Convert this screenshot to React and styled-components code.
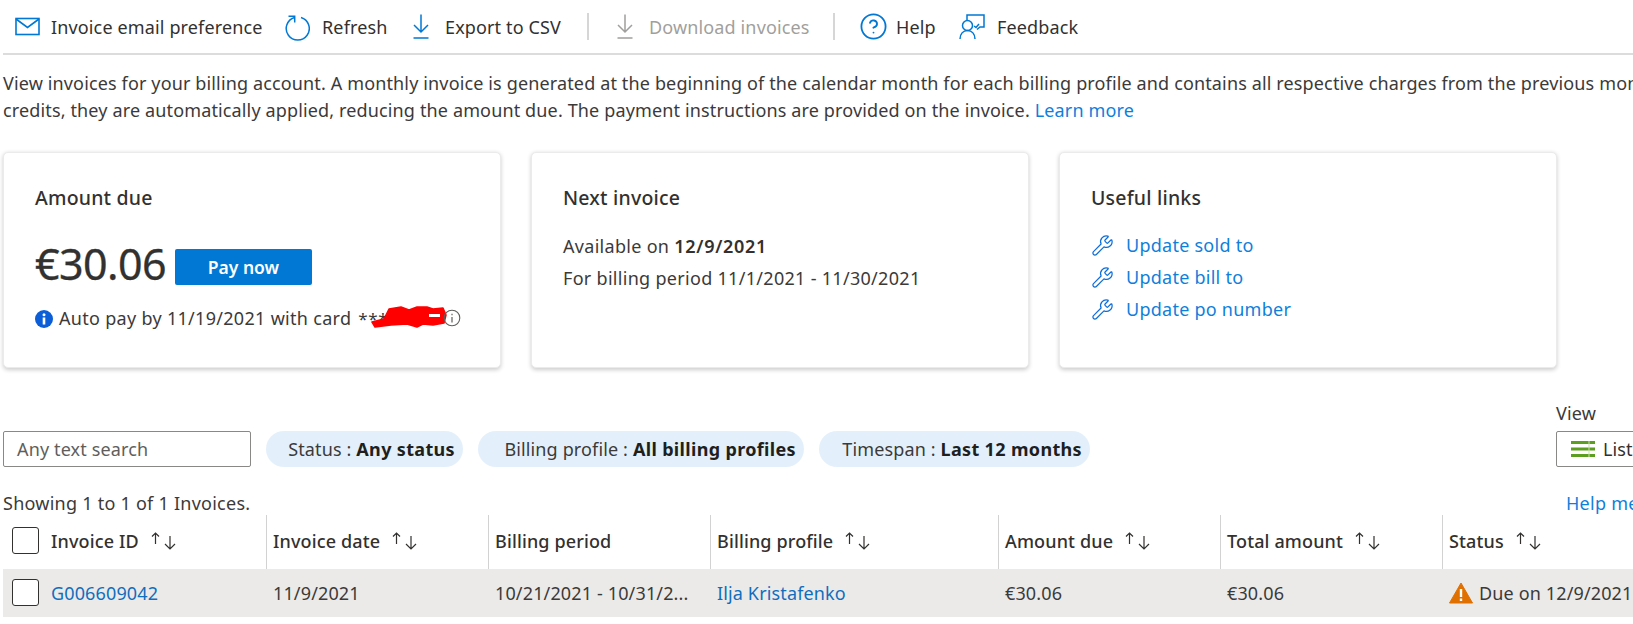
import React from 'react';
import styled, { createGlobalStyle } from 'styled-components';
import { Wrench, CircleHelp } from 'lucide-react';

const Global = createGlobalStyle`
  html, body { margin: 0; padding: 0; background: #fff; width: 1633px; height: 624px; overflow: hidden; }
  * { box-sizing: border-box; }
  body { font-family: "Noto Sans", "Open Sans", sans-serif; color: #323130; }
`;

const Page = styled.div`
  width: 1633px;
  height: 624px;
  overflow: hidden;
  font-size: 18px;
  letter-spacing: 0.14px;
`;

const Toolbar = styled.div`
  display: flex;
  align-items: center;
  height: 55px;
  margin-left: 3px;
  padding-left: 12px;
  border-bottom: 2px solid #dcdcdc;
`;

const ToolItem = styled.div`
  display: flex;
  align-items: center;
  width: ${p => p.$w}px;
  flex: none;
  color: ${p => (p.$disabled ? '#a19f9d' : '#323130')};
  svg { flex: none; }
`;

const ToolIcon = styled.span`
  display: flex;
  align-items: center;
  width: ${p => p.$w}px;
  flex: none;
  color: ${p => (p.$disabled ? '#a19f9d' : '#0078d4')};
`;

const ToolDivider = styled.div`
  width: 2px;
  height: 27px;
  flex: none;
  margin-right: ${p => p.$after}px;
  background: #d6d6d6;
`;

const Intro = styled.div`
  margin: 15px 0 0 3px;
  line-height: 27px;
  white-space: nowrap;
  color: #3b3a39;
`;

const Link = styled.a`
  color: ${p => p.$dark ? '#106ebe' : '#0f7fdc'};
`;

const Cards = styled.div`
  display: flex;
  gap: 30px;
  margin: 28px 0 0 3px;
`;

const Card = styled.section`
  width: 498px;
  height: 216px;
  flex: none;
  padding: 33px 30px 0 31px;
  background: #fff;
  border-radius: 5px;
  border: 1px solid #ebebeb;
  box-shadow: 0 1.5px 4px rgba(0, 0, 0, 0.2);
`;

const CardTitle = styled.h2`
  margin: 0;
  font-size: 19.5px;
  font-weight: 500;
  line-height: 24px;
  letter-spacing: 0.2px;
  color: #323130;
`;

const AmountRow = styled.div`
  display: flex;
  align-items: center;
  gap: 9px;
  margin-top: 28px;
`;

const Amount = styled.div`
  font-size: 43px;
  line-height: 52px;
  font-weight: 400;
  letter-spacing: -0.6px;
  color: #323130;
  -webkit-text-stroke: 0.3px #323130;
`;

const PayButton = styled.button`
  width: 137px;
  height: 36px;
  margin-top: 6px;
  border: 0;
  border-radius: 2px;
  background: #0078d4;
  color: #fff;
  font: 600 17.5px "Noto Sans", sans-serif;
`;

const AutoPay = styled.div`
  position: relative;
  display: flex;
  align-items: center;
  gap: 6px;
  margin-top: 15px;
  line-height: 26px;
  white-space: nowrap;
  letter-spacing: 0.3px;
  color: #3b3a39;
`;

const Stars = styled.span`
  font-size: 17px;
  letter-spacing: 0.6px;
  margin-left: 2px;
`;

const Scribble = styled.svg`
  position: absolute;
  left: 336px;
  top: 1px;
`;

const SmallInfo = styled.svg`
  position: absolute;
  left: 408px;
  top: 4px;
`;

const CardText = styled.div`
  line-height: 32px;
  letter-spacing: 0.3px;
  color: #3b3a39;
  strong { font-weight: 600; letter-spacing: 0.7px; color: #323130; }
`;

const CardBody = styled.div`
  margin-top: ${p => p.$mt}px;
`;

const LinkRow = styled.div`
  display: flex;
  align-items: center;
  gap: 12px;
  height: 32px;
  letter-spacing: 0.25px;
  color: #0f7fdc;
  svg { color: #0f6fd8; }
`;

const Filters = styled.div`
  position: relative;
  display: flex;
  gap: 15px;
  margin: 63px 0 0 3px;
  height: 37px;
`;

const SearchBox = styled.div`
  width: 248px;
  height: 36px;
  padding-left: 13px;
  display: flex;
  align-items: center;
  border: 1px solid #8a8886;
  border-radius: 2px;
  color: #605e5c;
`;

const Chip = styled.div`
  width: ${p => p.$w}px;
  height: 36px;
  display: flex;
  align-items: center;
  justify-content: flex-end;
  white-space: pre;
  padding-right: 8px;
  border-radius: 18px;
  background: #e3f0fb;
  color: #3b3a39;
  strong { font-weight: 700; letter-spacing: 0.34px; color: #201f1e; }
`;

const ViewBlock = styled.div`
  position: absolute;
  left: 1553px;
  top: -31px;
  width: 200px;
`;

const ViewLabel = styled.div`
  line-height: 26px;
  margin-bottom: 5px;
  color: #3b3a39;
`;

const ViewButton = styled.div`
  display: flex;
  align-items: center;
  gap: 8px;
  height: 36px;
  padding-left: 14px;
  border: 1px solid #8a8886;
  border-radius: 2px;
`;

const MetaRow = styled.div`
  display: flex;
  justify-content: space-between;
  align-items: center;
  margin: 22px 0 0 3px;
  height: 26px;
  letter-spacing: 0.25px;
  color: #3b3a39;
  white-space: nowrap;
`;

const HelpLink = styled(Link)`
  position: absolute;
  left: 1566px;
`;

const Grid = styled.div`
  display: grid;
  grid-template-columns: 264px 222px 222px 288px 222px 222px 190px;
  margin-left: 3px;
  margin-top: -1px;
`;

const HeadCell = styled.div`
  height: 54px;
  display: flex;
  align-items: center;
  padding-left: ${p => (p.$first ? '9px' : '6px')};
  padding-bottom: 3px;
  font-weight: 500;
  color: #323130;
  border-right: ${p => (p.$last ? '0' : '1.5px solid #d2d2d2')};
  white-space: nowrap;
`;

const RowCell = styled.div`
  height: 48px;
  display: flex;
  align-items: center;
  padding-left: ${p => (p.$first ? '9px' : '6px')};
  padding-bottom: 1px;
  background: #ebeae9;
  color: #3b3a39;
  white-space: nowrap;
  overflow: hidden;
`;

const Check = styled.span`
  width: 27px;
  height: 27px;
  flex: none;
  margin-right: 12px;
  background: #fff;
  border: 1.5px solid #323130;
  border-radius: 3px;
`;

const Sort = styled.svg`
  margin-left: 12px;
  flex: none;
`;

const Warn = styled.svg`
  margin-right: 6px;
  flex: none;
`;

const MailIcon = () => (
  <svg width="25" height="19" viewBox="0 0 25 19" fill="none" stroke="currentColor" strokeWidth="1.6">
    <rect x="1" y="1.500" width="23" height="16" />
    <path d="M1 2l11.500 8.500L24 2" />
  </svg>
);
const RefreshIcon = () => (
  <svg width="26" height="28" viewBox="0 0 26 28" fill="none" stroke="currentColor" strokeWidth="1.5">
    <path d="M10.500 4.500A11.500 11.500 0 1 0 17 4.500" />
    <path d="M4.500 3.200h6.200v6.200" />
  </svg>
);
const DownIcon = () => (
  <svg width="18" height="25" viewBox="0 0 18 25" fill="none" stroke="currentColor" strokeWidth="1.5">
    <path d="M9 0.500V18M2 11l7 7 7-7M1.500 24h15" />
  </svg>
);
const FeedbackIcon = () => (
  <svg width="26" height="25" viewBox="0 0 26 25" fill="none" stroke="currentColor" strokeWidth="1.5">
    <circle cx="8.500" cy="11.500" r="5" />
    <path d="M1 25c0-5 3-8.500 7.500-8.500S16 20 16 25" />
    <path d="M8 6V1h17v12h-4l-3 2.500" />
    <path d="M20 10l-3 3.500-2-1.500" />
  </svg>
);
const SortIcon = () => (
  <Sort width="25" height="19" viewBox="0 0 25 19" fill="none" stroke="#323130" strokeWidth="1.2">
    <path d="M4.500 13V2M1 5.500L4.500 2 8 5.500" />
    <path d="M19 5v13M14 13l5 5 5-5" />
  </Sort>
);

export default function App() {
  return (
    <Page>
      <Global />
      <Toolbar>
        <ToolItem $w={269}><ToolIcon $w={36}><MailIcon /></ToolIcon>Invoice email preference</ToolItem>
        <ToolItem $w={128}><ToolIcon $w={38}><RefreshIcon /></ToolIcon>Refresh</ToolItem>
        <ToolItem $w={175}><ToolIcon $w={33}><DownIcon /></ToolIcon>Export to CSV</ToolItem>
        <ToolDivider $after={27} />
        <ToolItem $w={217} $disabled><ToolIcon $w={33} $disabled><DownIcon /></ToolIcon>Download invoices</ToolItem>
        <ToolDivider $after={24} />
        <ToolItem $w={100}><ToolIcon $w={37}><CircleHelp size={29} strokeWidth={1.5} /></ToolIcon>Help</ToolItem>
        <ToolItem $w={200}><ToolIcon $w={38}><FeedbackIcon /></ToolIcon>Feedback</ToolItem>
      </Toolbar>
      <Intro>
        <div>View invoices for your billing account. A monthly invoice is generated at the beginning of the calendar month for each billing profile and contains all respective charges from the previous month.</div>
        <div>credits, they are automatically applied, reducing the amount due. The payment instructions are provided on the invoice. <Link>Learn more</Link></div>
      </Intro>
      <Cards>
        <Card>
          <CardTitle>Amount due</CardTitle>
          <AmountRow>
            <Amount>€30.06</Amount>
            <PayButton>Pay now</PayButton>
          </AmountRow>
          <AutoPay>
            <svg width="18" height="18" viewBox="0 0 18 18">
              <circle cx="9" cy="9" r="9" fill="#0b5ed7" />
              <rect x="7.700" y="7.500" width="2.600" height="7" fill="#fff" />
              <circle cx="9" cy="4.800" r="1.500" fill="#fff" />
            </svg>
            <span>Auto pay by 11/19/2021 with card <Stars>****</Stars></span>
            <Scribble width="76" height="22" viewBox="0 0 76 22">
              <path fillRule="evenodd" fill="#ff0000" stroke="#ff0000" strokeWidth="1.500" strokeLinejoin="round" d="M1 16L13 13 18 3 30 1 38 4 46 1 56 1 62 3 72 2 75 9 73 17 62 19 52 18 46 21 36 18 20 19 4 21zM59 8h10v3H59z" />
              <path d="M58 8h11v3H58z" fill="#ffffff" />
            </Scribble>
            <SmallInfo width="18" height="18" viewBox="0 0 18 18" fill="none">
              <circle cx="9" cy="9" r="7.800" stroke="#605e5c" strokeWidth="1.100" />
              <path d="M9 8v5.500M9 4.800v1.500" stroke="#605e5c" strokeWidth="1.200" />
            </SmallInfo>
          </AutoPay>
        </Card>
        <Card>
          <CardTitle>Next invoice</CardTitle>
          <CardBody $mt={20}>
            <CardText>Available on <strong>12/9/2021</strong></CardText>
            <CardText>For billing period 11/1/2021 - 11/30/2021</CardText>
          </CardBody>
        </Card>
        <Card>
          <CardTitle>Useful links</CardTitle>
          <CardBody $mt={19}>
            {['Update sold to', 'Update bill to', 'Update po number'].map(t => (
              <LinkRow key={t}><Wrench size={23} strokeWidth={1.3} />{t}</LinkRow>
            ))}
          </CardBody>
        </Card>
      </Cards>
      <Filters>
        <SearchBox>Any text search</SearchBox>
        <Chip $w={197}>Status : <strong>Any status</strong></Chip>
        <Chip $w={326}>Billing profile : <strong>All billing profiles</strong></Chip>
        <Chip $w={271}>Timespan : <strong>Last 12 months</strong></Chip>
        <ViewBlock>
          <ViewLabel>View</ViewLabel>
          <ViewButton>
            <svg width="24" height="18" viewBox="0 0 24 18">
              <path d="M0 1h24v3H0zM0 7.500h24v3H0zM0 14h24v3H0z" fill="#5c9e1f" />
              <path d="M18 1v16" stroke="#c9e0a8" strokeWidth="1" />
            </svg>
            List
          </ViewButton>
        </ViewBlock>
      </Filters>
      <MetaRow>
        Showing 1 to 1 of 1 Invoices.
        <HelpLink>Help me</HelpLink>
      </MetaRow>
      <Grid>
        <HeadCell $first><Check />Invoice ID<SortIcon /></HeadCell>
        <HeadCell>Invoice date<SortIcon /></HeadCell>
        <HeadCell>Billing period</HeadCell>
        <HeadCell>Billing profile<SortIcon /></HeadCell>
        <HeadCell>Amount due<SortIcon /></HeadCell>
        <HeadCell>Total amount<SortIcon /></HeadCell>
        <HeadCell $last>Status<SortIcon /></HeadCell>
        <RowCell $first><Check /><Link $dark>G006609042</Link></RowCell>
        <RowCell>11/9/2021</RowCell>
        <RowCell>10/21/2021 - 10/31/2...</RowCell>
        <RowCell><Link $dark>Ilja Kristafenko</Link></RowCell>
        <RowCell>€30.06</RowCell>
        <RowCell>€30.06</RowCell>
        <RowCell>
          <Warn width="24" height="22" viewBox="0 0 24 22">
            <path d="M12 1L23.500 21H.5z" fill="#e07000" stroke="#e07000" strokeLinejoin="round" />
            <path d="M12 7v8M12 16.500v2.500" stroke="#fff" strokeWidth="2.400" />
          </Warn>
          Due on 12/9/2021
        </RowCell>
      </Grid>
    </Page>
  );
}
